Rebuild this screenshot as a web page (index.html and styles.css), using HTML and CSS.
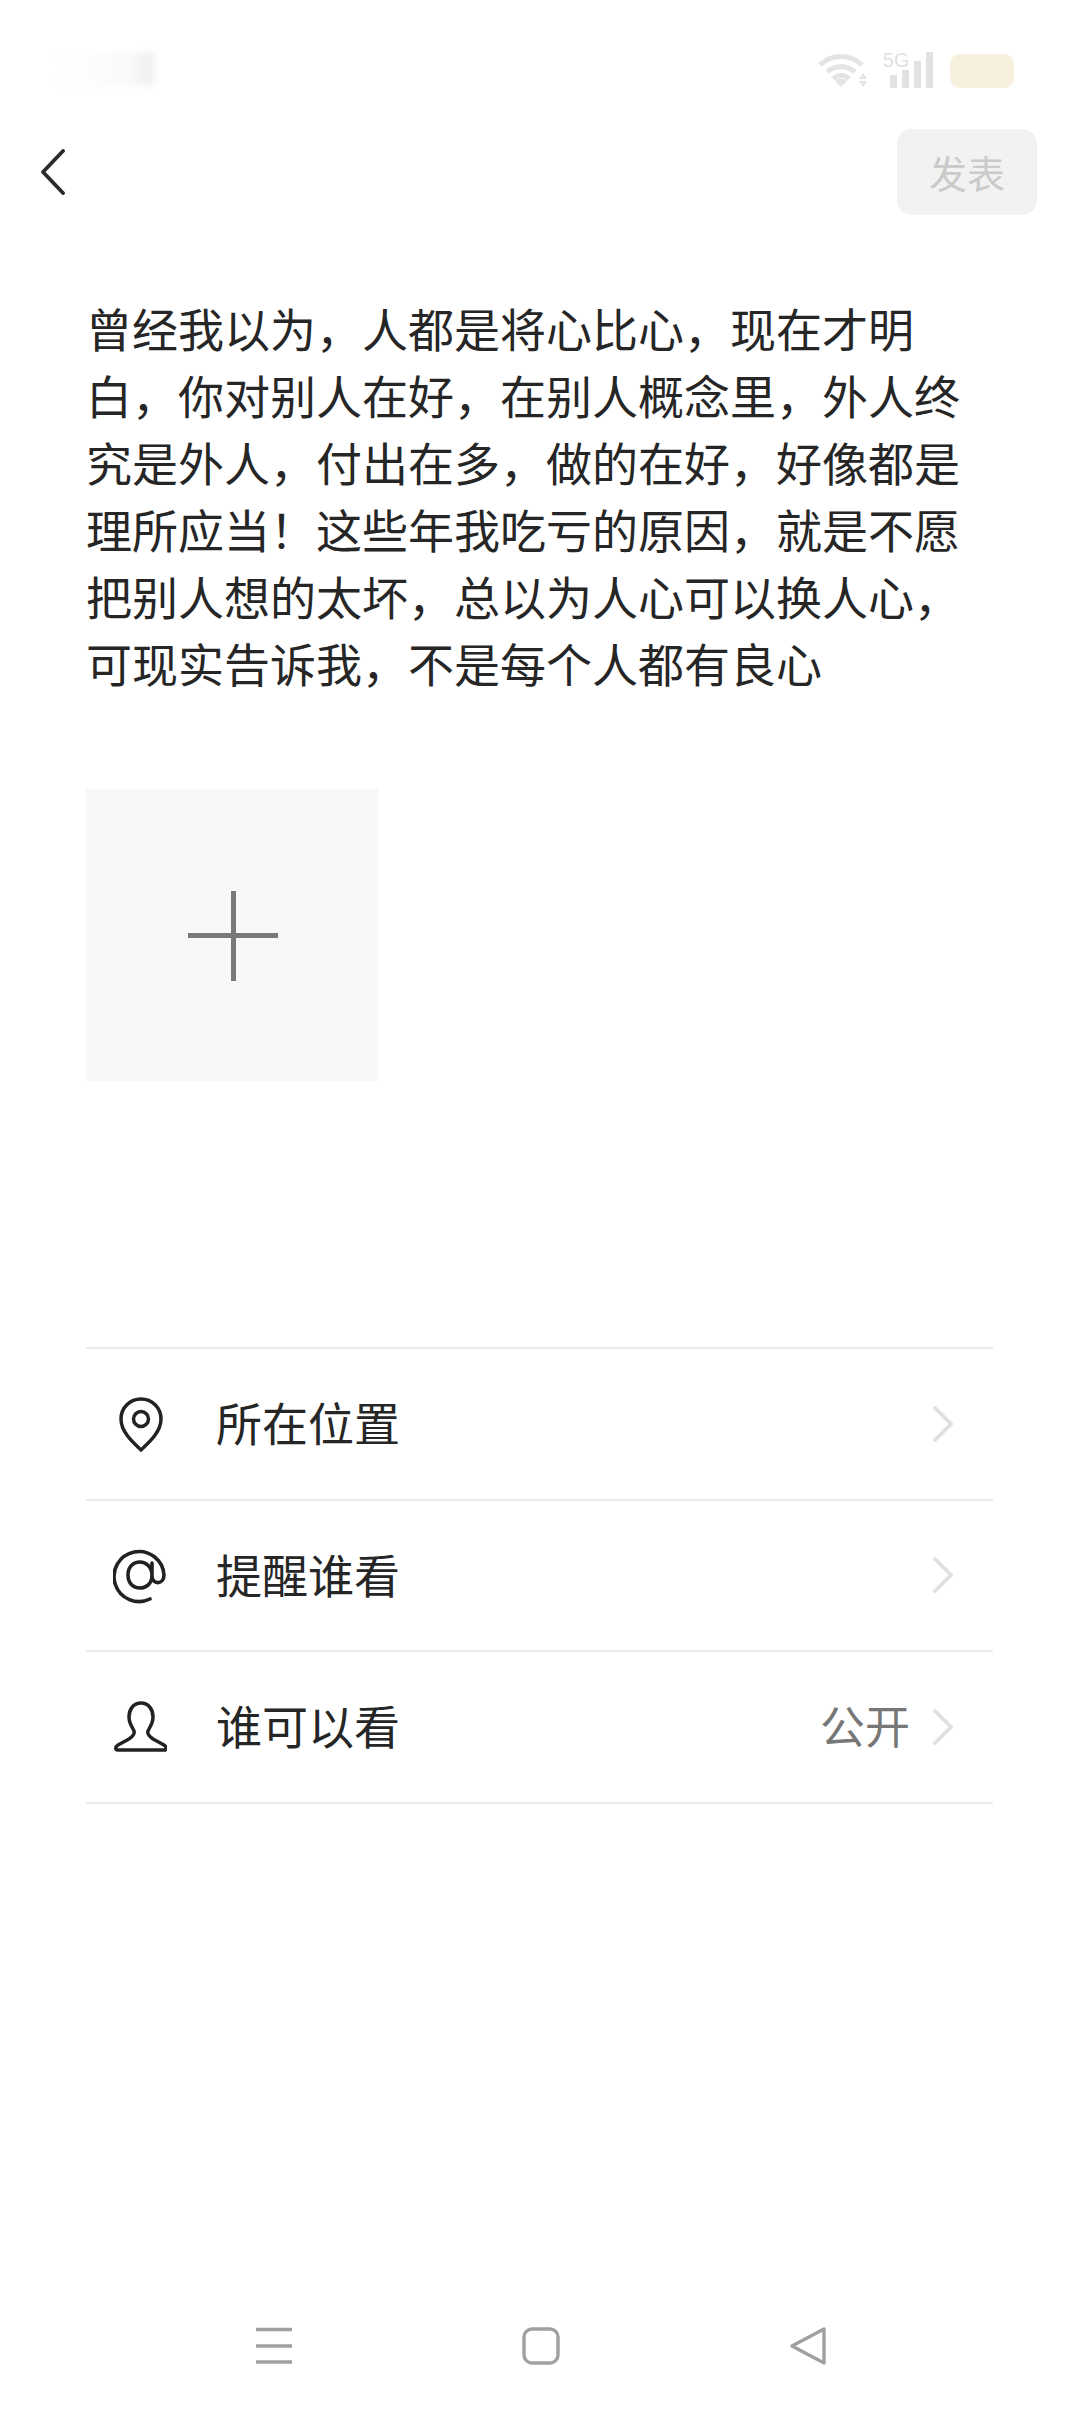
FILE: index.html
```html
<!DOCTYPE html>
<html lang="zh-CN">
<head>
    <meta charset="UTF-8">
    <meta name="viewport" content="width=device-width, initial-scale=1.0">
    <title>发表</title>
    <link rel="stylesheet" href="styles.css">
</head>
<body>
    <div class="status-bar">
        <div class="status-time"></div>
        <div class="status-icons">
            <svg class="wifi-icon" width="50" height="36" viewBox="0 0 50 36">
                <g fill="none" stroke="#e4e4e4" stroke-width="5">
                    <path d="M2 13 A30 30 0 0 1 44 13"/>
                    <path d="M9 20 A21 21 0 0 1 37 20"/>
                    <path d="M15 27 A11 11 0 0 1 31 27"/>
                </g>
                <path d="M17 29 A9 9 0 0 1 29 29 L23 35 Z" fill="#e4e4e4"/>
                <path d="M45 21l4 6h-8zM45 35l4-6h-8z" fill="#e4e4e4"/>
            </svg>
            <div class="signal">
                <span class="signal-label">5G</span>
                <span class="bar bar-1"></span>
                <span class="bar bar-2"></span>
                <span class="bar bar-3"></span>
                <span class="bar bar-4"></span>
            </div>
            <div class="battery"></div>
        </div>
    </div>

    <header class="top-bar">
        <svg class="back-icon" width="26" height="46" viewBox="0 0 26 46">
            <path d="M23 2 L3 23 L23 44" fill="none" stroke="#2b2b2b" stroke-width="3.8" stroke-linecap="round" stroke-linejoin="round"/>
        </svg>
        <button class="publish-btn">发表</button>
    </header>

    <main class="content">
        <p class="post-text">曾经我以为，人都是将心比心，现在才明白，你对别人在好，在别人概念里，外人终究是外人，付出在多，做的在好，好像都是理所应当！这些年我吃亏的原因，就是不愿把别人想的太坏，总以为人心可以换人心，可现实告诉我，不是每个人都有良心</p>

        <div class="add-tile">
            <span class="plus-h"></span>
            <span class="plus-v"></span>
        </div>

        <ul class="option-list">
            <li class="option-row">
                <svg class="option-icon" width="54" height="58" viewBox="0 0 54 58">
                    <path d="M28 55 C22 49 8 38 8 24 A20 20 0 0 1 48 24 C48 38 34 49 28 55 Z" fill="none" stroke="#222" stroke-width="3.5" stroke-linejoin="round"/>
                    <circle cx="28" cy="24" r="7.5" fill="none" stroke="#222" stroke-width="3.5"/>
                </svg>
                <span class="option-label">所在位置</span>
                <svg class="chevron" width="20" height="36" viewBox="0 0 20 36">
                    <path d="M2 2 L18 18 L2 34" fill="none" stroke="#e0e0e0" stroke-width="3.8" stroke-linecap="round" stroke-linejoin="round"/>
                </svg>
            </li>
            <li class="option-row">
                <svg class="option-icon" width="54" height="58" viewBox="0 0 54 58">
                    <path d="M37 53 A25 25 0 1 1 51 29 C51 39 39 39 39 30 L39 17 M39 29 C39 38 33 42 27 42 C20 42 15 37 15 29 C15 21 20 16 27 16 C33 16 39 21 39 29" fill="none" stroke="#222" stroke-width="3.6" stroke-linecap="round"/>
                </svg>
                <span class="option-label">提醒谁看</span>
                <svg class="chevron" width="20" height="36" viewBox="0 0 20 36">
                    <path d="M2 2 L18 18 L2 34" fill="none" stroke="#e0e0e0" stroke-width="3.8" stroke-linecap="round" stroke-linejoin="round"/>
                </svg>
            </li>
            <li class="option-row">
                <svg class="option-icon" width="54" height="58" viewBox="0 0 54 58">
                    <path d="M28 5 C20 5 16 12 16 19 C16 26 20 30 21 33 C22 36 19 39 16 41 L5 47 C2 49 2 52 5 52 L51 52 C54 52 54 49 51 47 L40 41 C37 39 34 36 35 33 C36 30 40 26 40 19 C40 12 36 5 28 5 Z" fill="none" stroke="#222" stroke-width="3.5" stroke-linejoin="round"/>
                </svg>
                <span class="option-label">谁可以看</span>
                <span class="option-value">公开</span>
                <svg class="chevron" width="20" height="36" viewBox="0 0 20 36">
                    <path d="M2 2 L18 18 L2 34" fill="none" stroke="#e0e0e0" stroke-width="3.8" stroke-linecap="round" stroke-linejoin="round"/>
                </svg>
            </li>
        </ul>
    </main>

    <nav class="nav-bar">
        <svg width="38" height="40" viewBox="0 0 38 40">
            <path d="M1 3.5H37M1 20H37M1 36H37" stroke="#a0a0a0" stroke-width="3.4"/>
        </svg>
        <svg width="38" height="40" viewBox="0 0 38 40">
            <rect x="2" y="3" width="34" height="34" rx="8" fill="none" stroke="#a0a0a0" stroke-width="3.4"/>
        </svg>
        <svg width="38" height="40" viewBox="0 0 38 40">
            <path d="M35 3 L35 37 L3 20 Z" fill="none" stroke="#a0a0a0" stroke-width="3.4" stroke-linejoin="round"/>
        </svg>
    </nav>
</body>
</html>
```

FILE: styles.css
```css
* {
    box-sizing: border-box;
}

html, body {
    height: 100%;
}

body {
    margin: 0;
    display: flex;
    flex-direction: column;
    background-color: #fff;
    color: #262626;
    font-family: "Noto Sans CJK SC", "Noto Sans", sans-serif;
}

/* Status bar, faded in the source */
.status-bar {
    height: 128px;
    padding: 52px 66px 0 55px;
    display: flex;
    justify-content: space-between;
    align-items: flex-start;
}

.status-time {
    width: 100px;
    height: 34px;
    background: linear-gradient(to right, #fff, #fafafa 70%, #f0f0f0);
    filter: blur(3px);
}

.status-icons {
    display: flex;
    align-items: flex-start;
    gap: 15px;
    height: 36px;
    filter: blur(0.6px);
}

.signal {
    position: relative;
    width: 50px;
    height: 36px;
    display: flex;
    align-items: flex-end;
    justify-content: flex-end;
    gap: 5px;
}

.signal-label {
    position: absolute;
    left: 0;
    top: 0;
    font-size: 20px;
    line-height: 16px;
    color: #e0e0e0;
    font-family: "Liberation Sans", sans-serif;
}

.bar {
    width: 7px;
    background-color: #e2e2e2;
}

.bar-1 { height: 13px; }
.bar-2 { height: 18px; }
.bar-3 { height: 27px; }
.bar-4 { height: 36px; }

.battery {
    width: 64px;
    height: 34px;
    margin-top: 2px;
    margin-left: 2px;
    border-radius: 10px;
    background-color: #f8f0de;
}

/* Top bar */
.top-bar {
    height: 88px;
    padding: 0 43px 0 40px;
    display: flex;
    justify-content: space-between;
    align-items: center;
}

.publish-btn {
    width: 140px;
    height: 86px;
    border: none;
    border-radius: 15px;
    background-color: #f2f2f2;
    color: #cacaca;
    font-family: inherit;
    font-size: 38px;
    padding: 0 0 2px;
}

/* Main form */
.content {
    flex: 1;
    padding: 0 87px 0 86px;
}

.post-text {
    margin: 78px 0 0;
    font-size: 46px;
    line-height: 67px;
}

.add-tile {
    position: relative;
    width: 292px;
    height: 292px;
    margin-top: 93px;
    background-color: #f7f7f7;
}

.plus-h, .plus-v {
    position: absolute;
    background-color: #787878;
}

.plus-h {
    left: 102px;
    top: 144px;
    width: 90px;
    height: 5px;
}

.plus-v {
    left: 145px;
    top: 102px;
    width: 5px;
    height: 90px;
}

.option-list {
    list-style: none;
    margin: 266px 0 0;
    padding: 0;
    border-top: 2px solid #ececec;
}

.option-row {
    height: 151.5px;
    display: flex;
    align-items: center;
    border-bottom: 2px solid #ececec;
    padding-right: 40px;
}

.option-icon {
    margin-left: 27px;
    margin-right: 50px;
}

.option-label {
    flex: 1;
    font-size: 46px;
    padding-bottom: 5px;
    margin-left: -1px;
}

.option-value {
    font-size: 45px;
    color: #777;
    margin-right: 23px;
    padding-bottom: 4px;
}

/* Nav bar */
.nav-bar {
    height: 130px;
    padding: 0 253px 46px 255px;
    display: flex;
    justify-content: space-between;
    align-items: flex-end;
}
```
